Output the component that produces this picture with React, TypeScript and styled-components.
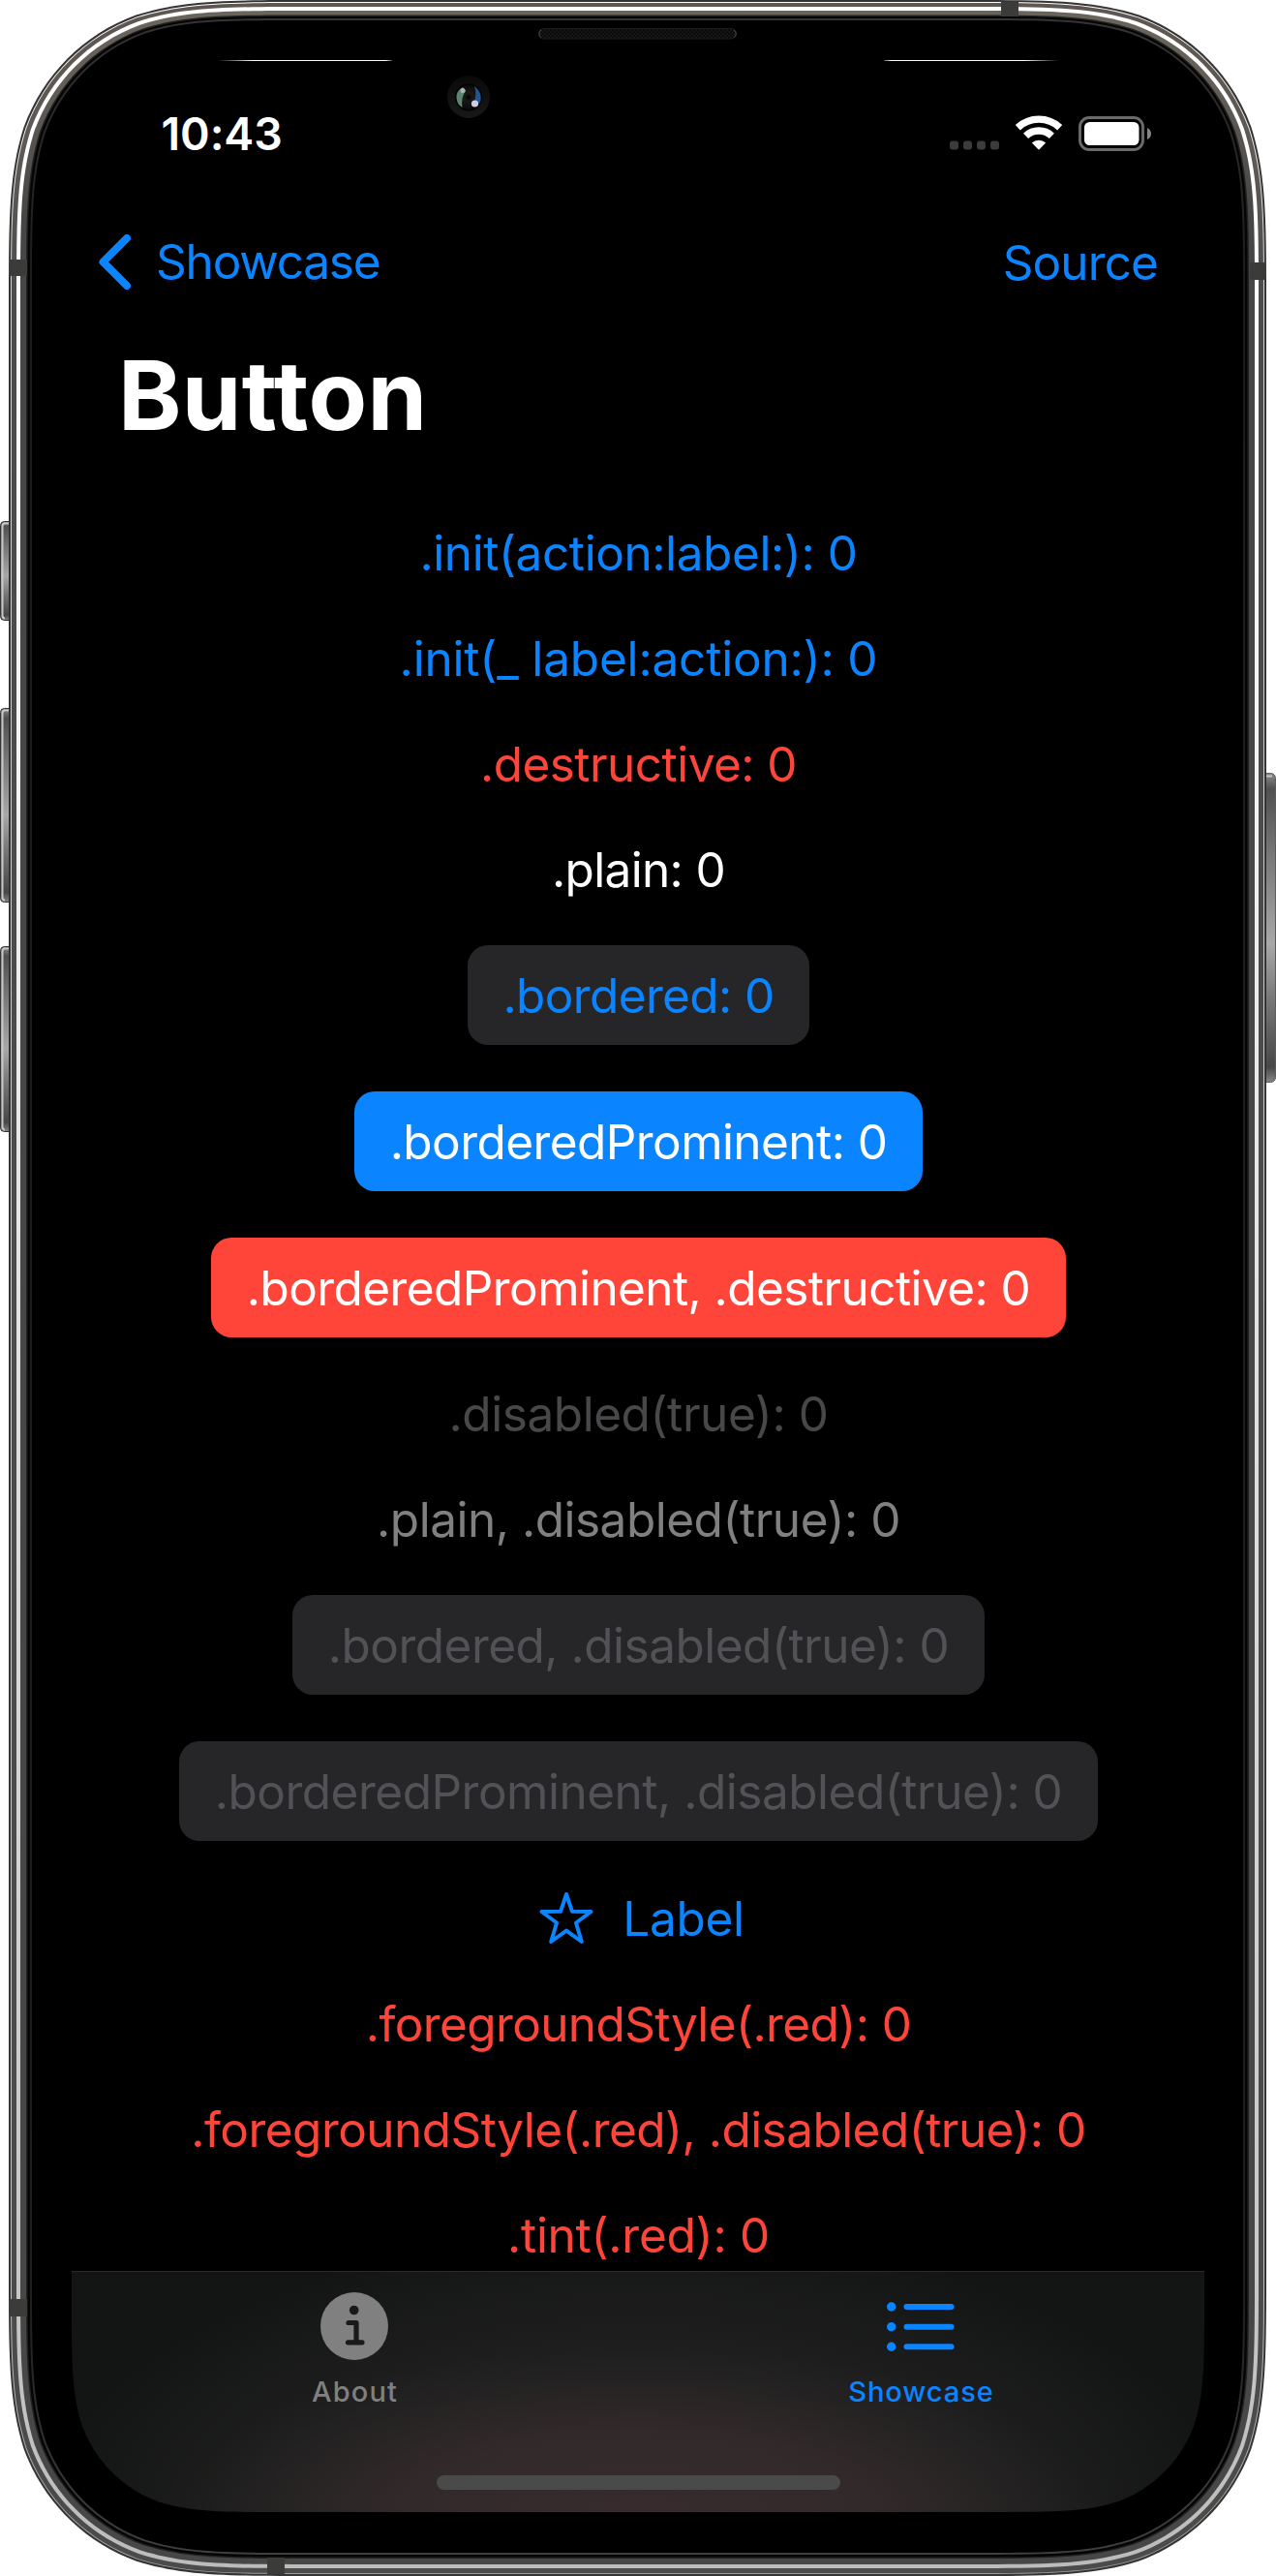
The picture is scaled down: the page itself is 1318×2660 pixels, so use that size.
import React from "react";
import styled, { createGlobalStyle } from "styled-components";

const BLUE = "#0a84ff";
const RED = "#ff453a";

const GlobalStyle = createGlobalStyle`
  *, *::before, *::after { box-sizing: border-box; }
  body {
    margin: 0;
    background: #fff;
    font-family: Inter, "Liberation Sans", sans-serif;
  }
`;

/* Rounded rectangle with continuous-curvature corners. */
function squircle(x: number, y: number, w: number, h: number, r: number): string {
  const k = [1.52866, 1.08849, 0.86841, 0.63149, 0.37282, 0.16906, 0.07491].map((v) => v * r);
  const [a, b, c, d, e, f, g] = k;
  const R = x + w;
  const B = y + h;
  return [
    `M${x + a},${y} L${R - a},${y}`,
    `C${R - b},${y} ${R - c},${y} ${R - d},${y + g}`,
    `C${R - e},${y + f} ${R - f},${y + e} ${R - g},${y + d}`,
    `C${R},${y + c} ${R},${y + b} ${R},${y + a}`,
    `L${R},${B - a}`,
    `C${R},${B - b} ${R},${B - c} ${R - g},${B - d}`,
    `C${R - f},${B - e} ${R - e},${B - f} ${R - d},${B - g}`,
    `C${R - c},${B} ${R - b},${B} ${R - a},${B}`,
    `L${x + a},${B}`,
    `C${x + b},${B} ${x + c},${B} ${x + d},${B - g}`,
    `C${x + e},${B - f} ${x + f},${B - e} ${x + g},${B - d}`,
    `C${x},${B - c} ${x},${B - b} ${x},${B - a}`,
    `L${x},${y + a}`,
    `C${x},${y + b} ${x},${y + c} ${x + g},${y + d}`,
    `C${x + f},${y + e} ${x + e},${y + f} ${x + d},${y + g}`,
    `C${x + c},${y} ${x + b},${y} ${x + a},${y}Z`,
  ].join(" ");
}

const Phone = styled.main`
  position: relative;
  width: 1318px;
  height: 2660px;
  padding: 65px 74px 66px;
  overflow: hidden;
`;

const BezelDrawing = styled.svg`
  position: absolute;
  inset: 0;
`;

const Screen = styled.div`
  position: relative;
  display: flex;
  flex-direction: column;
  width: 1170px;
  height: 2529px;
  clip-path: path("${squircle(0, -400, 1170, 2929, 142)}");
`;

const StatusBar = styled.header`
  display: flex;
  align-items: center;
  justify-content: space-between;
  height: 142px;
  padding: 2px 55px 0 92.5px;
`;

const Clock = styled.time`
  margin-top: 2px;
  color: #fff;
  font-size: 46.5px;
  font-weight: 600;
  line-height: 56px;
  letter-spacing: -0.1px;
`;

const Indicators = styled.div`
  display: flex;
  align-items: center;
`;

const NavBar = styled.nav`
  display: flex;
  align-items: center;
  justify-content: space-between;
  height: 126px;
  padding: 0 48px 0 28px;
`;

const NavButton = styled.button<{ $gap?: number; $shift?: number; $tracking: number }>`
  display: flex;
  align-items: center;
  gap: ${(p) => p.$gap ?? 0}px;
  padding: ${(p) => p.$shift ?? 0}px 0 0;
  border: 0;
  background: none;
  color: ${BLUE};
  font: 400 49.5px/61px Inter, "Liberation Sans", sans-serif;
  letter-spacing: ${(p) => p.$tracking}px;
`;

const Title = styled.h1`
  height: 142px;
  margin: 0;
  padding: 15px 0 0 48px;
  color: #fff;
  font-size: 99px;
  font-weight: 700;
  line-height: 120px;
  letter-spacing: 0.3px;
`;

const List = styled.section`
  display: flex;
  flex: 1;
  flex-direction: column;
  align-items: center;
  gap: 48px;
  min-height: 0;
  padding: 65px 0 0 1px;
`;

const DemoButton = styled.button<{ $color: string; $fill?: string; $width: number; $height: number; $tracking: number }>`
  display: flex;
  flex: none;
  align-items: center;
  justify-content: center;
  width: ${(p) => p.$width}px;
  height: ${(p) => p.$height}px;
  padding: 2px 0 0;
  border: 0;
  border-radius: 21px;
  background: ${(p) => p.$fill ?? "transparent"};
  color: ${(p) => p.$color};
  font: 400 49.5px/61px Inter, "Liberation Sans", sans-serif;
  letter-spacing: ${(p) => p.$tracking}px;
  white-space: pre;
`;

const StarIcon = styled.svg`
  flex: none;
  margin: 0 29px 0 6px;
`;

const TabBar = styled.footer`
  display: grid;
  flex: none;
  grid-template-columns: 1fr 1fr;
  grid-template-rows: 210px 15px;
  height: 249px;
  border-top: 1px solid #2b2c2b;
  background:
    radial-gradient(ellipse 500px 180px at 50% 104%, rgba(58, 44, 46, 0.85) 0%, rgba(55, 44, 45, 0.75) 50%, rgba(45, 40, 40, 0.35) 80%, rgba(30, 30, 30, 0) 100%),
    radial-gradient(ellipse 620px 290px at 50% 100%, #292626 0%, #1e1e1e 60%, #131514 100%);
`;

const Tab = styled.button<{ $active?: boolean }>`
  display: flex;
  flex-direction: column;
  align-items: center;
  gap: 15px;
  padding: 21px 0 0;
  border: 0;
  background: none;
  color: ${(p) => (p.$active ? BLUE : "#808080")};
  font: 500 29px/36px Inter, "Liberation Sans", sans-serif;
  letter-spacing: ${(p) => (p.$active ? 0.95 : 1.15)}px;
`;

const TabIcon = styled.svg`
  margin-right: 2px;
`;

const HomeIndicator = styled.div`
  grid-column: 1 / -1;
  justify-self: center;
  width: 417px;
  height: 15px;
  border-radius: 7.5px;
  background: #4a4a4a;
`;

type Layer = { inset: number; top: number; fill: string };

const layers: Layer[] = [
  { inset: 0, top: 0, fill: "#333433" },
  { inset: 2, top: 2, fill: "url(#glint)" },
  { inset: 3, top: 3, fill: "url(#outerMetal)" },
  { inset: 8, top: 7, fill: "url(#shine)" },
  { inset: 12, top: 11, fill: "url(#innerMetal)" },
  { inset: 18, top: 15.5, fill: "#222221" },
  { inset: 19.5, top: 17, fill: "#050505" },
  { inset: 22, top: 19, fill: "url(#rim)" },
  { inset: 24, top: 21, fill: "#000" },
];

const bands = [
  { x: 10, y: 268, w: 18, h: 17 },
  { x: 1034, y: 2, w: 18, h: 15 },
  { x: 1291, y: 271, w: 16, h: 18 },
  { x: 10, y: 2374, w: 18, h: 18 },
  { x: 276, y: 2641, w: 18, h: 17 },
];

const leftKeys = [
  { y: 538.5, h: 102 },
  { y: 731.5, h: 200 },
  { y: 977.5, h: 191 },
];

function Bezel() {
  return (
    <BezelDrawing width="1318" height="2660" viewBox="0 0 1318 2660" aria-hidden="true">
      <defs>
        <linearGradient id="outerMetal" x1="0" y1="0" x2="0" y2="1">
          <stop offset="0" stopColor="#5e5751" />
          <stop offset="0.06" stopColor="#5e5955" />
          <stop offset="0.12" stopColor="#4b4b4a" />
          <stop offset="1" stopColor="#4b4b4a" />
        </linearGradient>
        <linearGradient id="innerMetal" x1="0" y1="0" x2="0" y2="1">
          <stop offset="0" stopColor="#69645c" />
          <stop offset="0.03" stopColor="#625d56" />
          <stop offset="0.08" stopColor="#464646" />
          <stop offset="1" stopColor="#474747" />
        </linearGradient>
        <linearGradient id="shine" x1="0" y1="0" x2="0" y2="1">
          <stop offset="0" stopColor="#fff" />
          <stop offset="0.2" stopColor="#fbfafa" />
          <stop offset="0.45" stopColor="#e8e6e6" />
          <stop offset="0.9" stopColor="#c6c6c6" />
          <stop offset="1" stopColor="#bcbcbc" />
        </linearGradient>
        <linearGradient id="glint" x1="0" y1="0" x2="0" y2="1">
          <stop offset="0" stopColor="#fff" />
          <stop offset="0.1" stopColor="#d0d2d0" />
          <stop offset="0.88" stopColor="#c2c2c2" />
          <stop offset="1" stopColor="#9a9c9a" />
        </linearGradient>
        <linearGradient id="rim" x1="0" y1="0" x2="0" y2="1">
          <stop offset="0" stopColor="#343434" />
          <stop offset="0.1" stopColor="#1d1d1d" />
          <stop offset="0.9" stopColor="#1f1f1f" />
          <stop offset="1" stopColor="#404040" />
        </linearGradient>
        <linearGradient id="key" x1="0" y1="0" x2="0" y2="1">
          <stop offset="0" stopColor="#8b8b8b" />
          <stop offset="0.05" stopColor="#505050" />
          <stop offset="0.28" stopColor="#7a7a7a" />
          <stop offset="0.55" stopColor="#a8a8a8" />
          <stop offset="0.75" stopColor="#737373" />
          <stop offset="0.95" stopColor="#474747" />
          <stop offset="1" stopColor="#858585" />
        </linearGradient>
        <linearGradient id="leftHairline" x1="0" y1="0" x2="1" y2="0">
          <stop offset="0" stopColor="#fff" stopOpacity="0" />
          <stop offset="0.2" stopColor="#fff" />
          <stop offset="0.96" stopColor="#fff" />
          <stop offset="1" stopColor="#fff" stopOpacity="0.3" />
        </linearGradient>
        <linearGradient id="rightHairline" x1="1" y1="0" x2="0" y2="0">
          <stop offset="0" stopColor="#fff" stopOpacity="0" />
          <stop offset="0.2" stopColor="#fff" />
          <stop offset="0.96" stopColor="#fff" />
          <stop offset="1" stopColor="#fff" stopOpacity="0.3" />
        </linearGradient>
        <pattern id="mesh" width="4" height="4" patternUnits="userSpaceOnUse">
          <rect width="4" height="4" fill="#0b0b0b" />
          <rect width="2" height="2" fill="#151515" />
          <rect x="2" y="2" width="2" height="2" fill="#151515" />
        </pattern>
        <radialGradient id="lens">
          <stop offset="0" stopColor="#000" />
          <stop offset="0.35" stopColor="#1a1817" />
          <stop offset="1" stopColor="#0a0a0a" />
        </radialGradient>
        <linearGradient id="lensRing" x1="0" y1="0" x2="0" y2="1">
          <stop offset="0" stopColor="#090909" />
          <stop offset="1" stopColor="#181818" />
        </linearGradient>
      </defs>

      {leftKeys.map((k) => (
        <g key={k.y}>
          <rect x="0.5" y={k.y} width="16" height={k.h} rx="4" fill="url(#key)" stroke="#343434" />
          <path d={`M9,${k.y + 2} H5 Q2.5,${k.y + 2} 2.5,${k.y + 5} V${k.y + k.h - 5} Q2.5,${k.y + k.h - 2} 5,${k.y + k.h - 2}`} fill="none" stroke="#c9c6c6" strokeWidth="2" />
        </g>
      ))}
      <rect x="1302" y="798.5" width="15.5" height="319" rx="5" fill="url(#key)" stroke="#5c5c5c" />
      <path d="M1308,801.5 H1314" stroke="#c4c4c4" strokeWidth="2" />

      {layers.map((l) => (
        <path
          key={l.inset}
          d={squircle(9 + l.inset, l.top, 1299 - 2 * l.inset, 2660 - l.top - l.inset, 208 - l.inset)}
          fill={l.fill}
        />
      ))}
      {bands.map((b) => (
        <rect key={`${b.x}-${b.y}`} x={b.x} y={b.y} width={b.w} height={b.h} fill="#3b3b3a" />
      ))}

      <rect x="225" y="62" width="180" height="1" fill="url(#leftHairline)" />
      <rect x="913" y="62" width="181" height="1" fill="url(#rightHairline)" />
      <rect x="556.5" y="29.5" width="204" height="10.5" rx="5.2" fill="url(#mesh)" stroke="#1c1c1c" />
      <path d="M559,31 Q554.5,35 559,39 M758,31 Q762.5,35 758,39" fill="none" stroke="#4a4a4a" />

      <circle cx="484" cy="100" r="22" fill="url(#lensRing)" />
      <circle cx="484" cy="100.5" r="14" fill="#020202" />
      <circle cx="484" cy="100.5" r="12.5" fill="url(#lens)" />
      <path d="M478,90 Q471,94 471.5,101 Q472,108 477.5,111 Q476,100 481,94Z" fill="#5c8571" />
      <path d="M490,89 Q498,95 496.5,104 Q495,109 489,108 Q493,98 490,89Z" fill="#1f5795" />
      <circle cx="478" cy="93.5" r="2.5" fill="#a9b8ae" />
      <circle cx="490.5" cy="107" r="3.6" fill="#cfcde6" />
    </BezelDrawing>
  );
}

function StatusIcons() {
  return (
    <svg width="208" height="37" viewBox="981 118 208 37" aria-hidden="true">
      {[981, 995, 1009, 1023].map((x) => (
        <rect key={x} x={x} y="144.5" width="9" height="9" rx="3" fill="#3b3b3b" />
      ))}
      <g fill="none" stroke="#fff" strokeWidth="7.4">
        <path d="M1051.3,130.7 A31.8,31.8 0 0 1 1094.7,130.7" />
        <path d="M1059.6,139.4 A19.5,19.5 0 0 1 1086.4,139.4" />
      </g>
      <path d="M1073,153.8 L1065.8,146.6 A10.2,10.2 0 0 1 1080.2,146.6Z" fill="#fff" />
      <rect x="1115.5" y="120.5" width="65" height="33" rx="9.5" fill="none" stroke="#6b6b6b" strokeWidth="2.9" />
      <rect x="1120" y="125" width="56.5" height="24" rx="5.5" fill="#fff" />
      <path d="M1185,131 Q1189,133 1189,137 Q1189,141 1185,143Z" fill="#858585" />
    </svg>
  );
}

type Demo = {
  text: string;
  color: string;
  fill?: string;
  width: number;
  height?: number;
  tracking: number;
  star?: boolean;
};

const demos: Demo[] = [
  { text: ".init(action:label:): 0", color: BLUE, width: 454, tracking: -0.42 },
  { text: ".init(_ label:action:): 0", color: BLUE, width: 496, tracking: -0.18 },
  { text: ".destructive: 0", color: RED, width: 328, tracking: -0.54 },
  { text: ".plain: 0", color: "#fff", width: 180, tracking: -0.65 },
  { text: ".bordered: 0", color: BLUE, fill: "#262628", width: 353, tracking: -0.63 },
  { text: ".borderedProminent: 0", color: "#fff", fill: BLUE, width: 587, tracking: -0.57 },
  { text: ".borderedProminent, .destructive: 0", color: "#fff", fill: RED, width: 883, tracking: -0.58 },
  { text: ".disabled(true): 0", color: "#48484a", width: 394, tracking: -0.43 },
  { text: ".plain, .disabled(true): 0", color: "#808080", width: 542, tracking: -0.49 },
  { text: ".bordered, .disabled(true): 0", color: "#525256", fill: "#262628", width: 715, tracking: -0.51 },
  { text: ".borderedProminent, .disabled(true): 0", color: "#525256", fill: "#262628", width: 949, tracking: -0.49 },
  { text: "Label", color: BLUE, width: 230, height: 62, tracking: -0.3, star: true },
  { text: ".foregroundStyle(.red): 0", color: RED, width: 566, tracking: -0.61 },
  { text: ".foregroundStyle(.red), .disabled(true): 0", color: RED, width: 926, tracking: -0.55 },
  { text: ".tint(.red): 0", color: RED, width: 272, tracking: -0.25 },
];

export default function App() {
  return (
    <>
      <GlobalStyle />
      <Phone>
        <Bezel />
        <Screen>
          <StatusBar>
            <Clock>10:43</Clock>
            <Indicators>
              <StatusIcons />
            </Indicators>
          </StatusBar>
          <NavBar>
            <NavButton $gap={25} $tracking={-1.2}>
              <svg width="34" height="57" viewBox="0 0 34 57" fill="none" aria-hidden="true">
                <path d="M29,4 L4.5,28.5 L29,53" stroke={BLUE} strokeWidth="8" strokeLinecap="round" strokeLinejoin="round" />
              </svg>
              Showcase
            </NavButton>
            <NavButton $shift={3} $tracking={-0.9}>Source</NavButton>
          </NavBar>
          <Title>Button</Title>
          <List>
            {demos.map((d) => (
              <DemoButton
                key={d.text}
                $color={d.color}
                $fill={d.fill}
                $width={d.width}
                $height={d.height ?? (d.fill ? 103 : 61)}
                $tracking={d.tracking}
              >
                {d.star && (
                  <StarIcon width="58" height="56" viewBox="0 0 58 56" fill="none" aria-hidden="true">
                    <path
                      d="M29,3 L35,20.8 L54.5,21 L39,32.5 L44.8,52 L29,40.6 L13.2,52 L19,32.5 L3.5,21 L23,20.8Z"
                      stroke={BLUE}
                      strokeWidth="4"
                      strokeLinejoin="round"
                    />
                  </StarIcon>
                )}
                {d.text}
              </DemoButton>
            ))}
          </List>
          <TabBar>
            <Tab>
              <TabIcon width="70" height="70" viewBox="0 0 70 70" fill="none" aria-hidden="true">
                <circle cx="35" cy="35" r="35" fill="#808080" />
                <circle cx="34.7" cy="18.5" r="4.8" fill="#191a1a" />
                <path d="M29,31.5 H37 V51.8 M28.5,51.8 H43" stroke="#191a1a" strokeWidth="5.2" strokeLinecap="round" strokeLinejoin="round" />
              </TabIcon>
              About
            </Tab>
            <Tab $active>
              <TabIcon width="70" height="70" viewBox="0 0 70 70" aria-hidden="true">
                {[15, 35.7, 56.3].map((y) => (
                  <g key={y} fill={BLUE}>
                    <circle cx="4.7" cy={y} r="4.7" />
                    <rect x="17.5" y={y - 3} width="52" height="6" rx="3" />
                  </g>
                ))}
              </TabIcon>
              Showcase
            </Tab>
            <HomeIndicator />
          </TabBar>
        </Screen>
      </Phone>
    </>
  );
}
